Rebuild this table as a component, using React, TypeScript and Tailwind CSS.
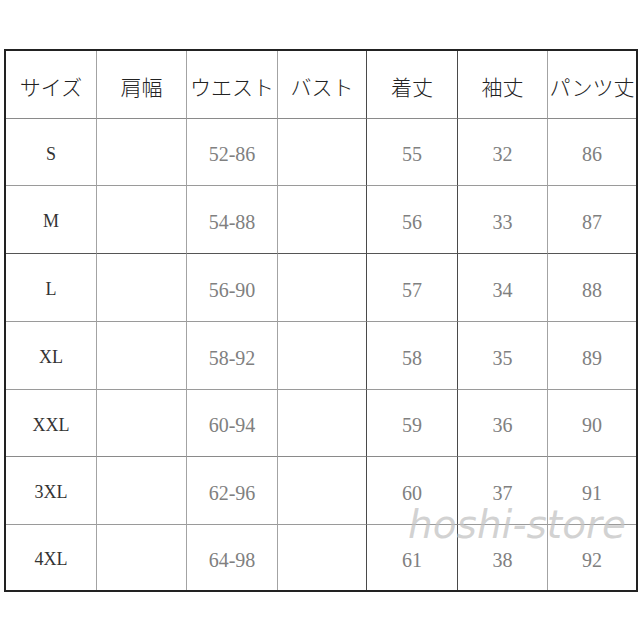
const headers = ["サイズ", "肩幅", "ウエスト", "バスト", "着丈", "袖丈", "パンツ丈"];

const rows = [
  ["S", "", "52-86", "", "55", "32", "86"],
  ["M", "", "54-88", "", "56", "33", "87"],
  ["L", "", "56-90", "", "57", "34", "88"],
  ["XL", "", "58-92", "", "58", "35", "89"],
  ["XXL", "", "60-94", "", "59", "36", "90"],
  ["3XL", "", "62-96", "", "60", "37", "91"],
  ["4XL", "", "64-98", "", "61", "38", "92"],
];

// vertical divider colour per column (last column has none)
const colLine = [
  "border-r border-r-[#a3a3a3]",
  "border-r border-r-[#a3a3a3]",
  "border-r border-r-[#a3a3a3]",
  "border-r border-r-[#4a4a4a]",
  "border-r border-r-[#4a4a4a]",
  "border-r border-r-[#a3a3a3]",
  "",
];

// horizontal divider colour per row (last row has none)
const rowLine = [
  "border-b border-b-[#8a8a8a]",
  "border-b border-b-[#9a9a9a]",
  "border-b border-b-[#555555]",
  "border-b border-b-[#9a9a9a]",
  "border-b border-b-[#9a9a9a]",
  "border-b border-b-[#8a8a8a]",
  "border-b border-b-[#9a9a9a]",
  "",
];

export default function App() {
  return (
    <div className="relative h-[640px] w-[640px] overflow-hidden bg-white">
      <div className="ml-[4px] mt-[49px] h-[543px] w-[634px] border-2 border-[#222222]">
        <div className="grid grid-cols-[91px_90px_91px_89px_91px_90px_88px] grid-rows-[68px_67px_68px_68px_68px_67px_68px_65px]">
          {headers.map((h, c) => (
            <div
              key={h}
              className={`flex items-center justify-center whitespace-nowrap pt-[5px] text-[21px] text-[#222222] [font-family:'Noto_Sans_CJK_JP',sans-serif] font-light ${colLine[c]} ${rowLine[0]}`}
            >
              {h}
            </div>
          ))}
          {rows.map((row, r) =>
            row.map((v, c) => (
              <div
                key={`${r}-${c}`}
                className={`flex items-center justify-center pt-[4px] [font-family:'Liberation_Serif',serif] ${
                  c === 0 ? "text-[18px] text-[#333333]" : "text-[20px] text-[#808080]"
                } ${colLine[c]} ${rowLine[r + 1]}`}
              >
                {v}
              </div>
            ))
          )}
        </div>
      </div>
      <div className="absolute left-[408px] top-[505px] leading-none text-[39px] italic text-[#c4c4c4]/75 [font-family:'DejaVu_Sans',sans-serif]">
        hoshi-store
      </div>
    </div>
  );
}
